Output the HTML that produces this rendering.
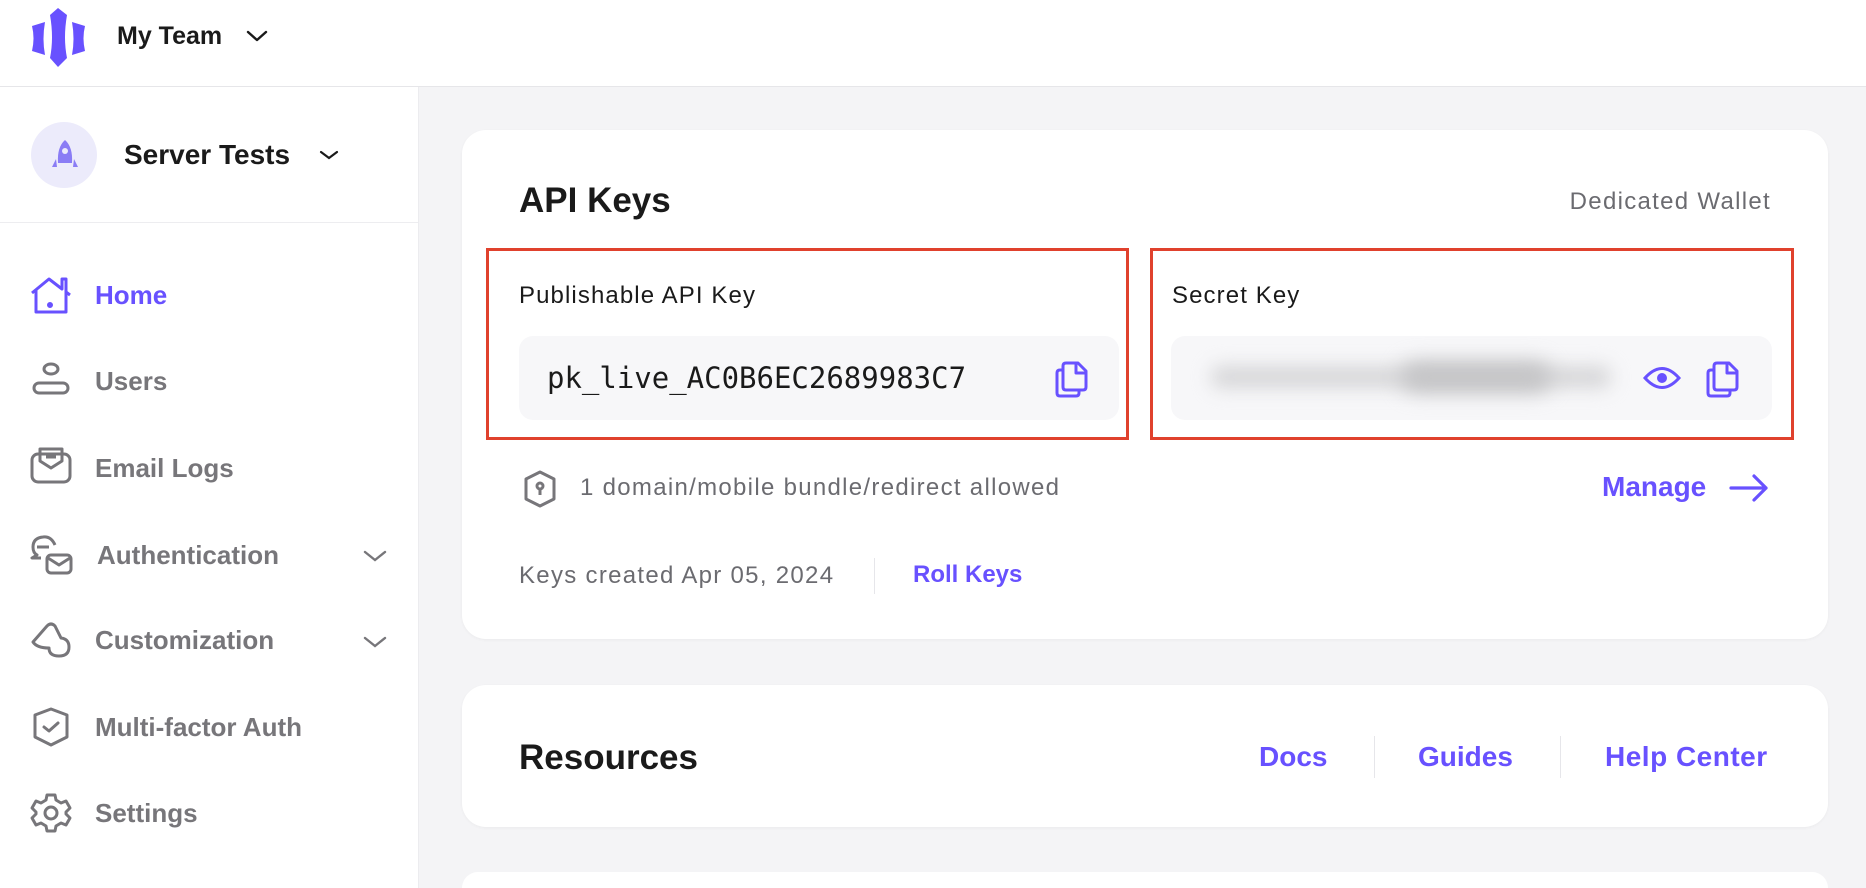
<!DOCTYPE html>
<html><head><meta charset="utf-8"><style>
*{box-sizing:border-box;margin:0;padding:0}
html{width:1866px;height:888px;overflow:hidden}
body{width:1866px;height:888px;overflow:hidden;background:#f4f4f6;font-family:"Liberation Sans",sans-serif;position:relative;color:#1a1a1a}
.abs{position:absolute}
.hdr{left:0;top:0;width:1866px;height:87px;background:#fff;border-bottom:1px solid #e6e6e9}
.side{left:0;top:87px;width:419px;height:801px;background:#fff}
.nav{position:absolute;left:29px;display:flex;align-items:center;font-size:26px;font-weight:bold;color:#77767a}
.nav svg{width:44px;height:44px;margin-right:22px}
.card{background:#fff;border-radius:24px;left:462px;width:1366px;box-shadow:0 1px 3px rgba(0,0,0,.04)}
.purple{color:#6851ff}
.red{border:3px solid #e0412d}
.kb{background:#f7f7f9;border-radius:14px}
.chev{position:absolute}
.g{font-size:24px;letter-spacing:1.3px;color:#6b6b70}
</style></head><body>
<div class="abs hdr">
<svg class="abs" style="left:30px;top:6px" width="58" height="64" viewBox="30 4 58 64">
<path d="M50 13 L58 6 L67 13 Q63 36 67 56 L58 65 L50 56 Q54 36 50 13Z" fill="#6851ff"/>
<path d="M32 24 L45 20 Q42 37 45 53 L32 49 Q35 36 32 24Z" fill="#6851ff"/>
<path d="M85 24 L72 20 Q75 37 72 53 L85 49 Q82 36 85 24Z" fill="#6851ff"/>
</svg>
<div class="abs" style="left:117px;top:22px;font-size:25px;font-weight:bold;color:#1a1a1a">My Team</div>
<svg class="abs" style="left:245px;top:28px" width="24" height="16" viewBox="0 0 24 16"><path d="M3 4 L12 12 L21 4" fill="none" stroke="#1a1a1a" stroke-width="2.4" stroke-linecap="round" stroke-linejoin="round"/></svg>
</div>
<div class="abs side">
<div class="abs" style="left:31px;top:35px;width:66px;height:66px;border-radius:50%;background:#ecebfb"></div>
<svg class="abs" style="left:48px;top:50px" width="34" height="36" viewBox="0 0 34 36"><path d="M17 3 Q25 10 24 26 L10 26 Q9 10 17 3Z" fill="#8a7cf5"/><circle cx="17" cy="14" r="3" fill="#ecebfb"/><path d="M8 22 L4 30 L9 30Z M26 22 L30 30 L25 30Z" fill="#8a7cf5"/></svg>
<div class="abs" style="left:124px;top:52px;font-size:28px;font-weight:bold;color:#1a1a1a">Server Tests</div>
<svg class="abs" style="left:318px;top:61px" width="22" height="14" viewBox="0 0 22 14"><path d="M3 4 L11 10 L19 4" fill="none" stroke="#1a1a1a" stroke-width="2.2" stroke-linecap="round"/></svg>
<div class="abs" style="left:0;top:135px;width:419px;height:1px;background:#ededf0"></div>
</div>
<div class="abs" style="left:418px;top:87px;width:1px;height:801px;background:#ececef"></div>

<div class="nav purple" style="top:273px;color:#6851ff"><svg viewBox="0 0 44 44" fill="none" stroke="#6851ff" stroke-width="3" stroke-linejoin="round"><path d="M3 20 L20 6 L33 16 L33 6 L37 6 L37 19 L41 22 M7 17 L7 39 L37 39 L37 19"/><circle cx="21" cy="32" r="1.5" fill="#6851ff"/></svg>Home</div>
<div class="nav" style="top:359px"><svg viewBox="0 0 44 44" fill="none" stroke="#77767a" stroke-width="3"><ellipse cx="22" cy="10" rx="7" ry="5"/><rect x="5" y="24" width="34" height="10" rx="5"/></svg>Users</div>
<div class="nav" style="top:446px"><svg viewBox="0 0 44 44" fill="none" stroke="#77767a" stroke-width="3" stroke-linejoin="round"><rect x="3" y="8" width="38" height="28" rx="6"/><path d="M11 15 L11 3 L33 3 L33 15 L22 22 Z"/><path d="M17 11 L27 11"/></svg>Email Logs</div>
<div class="nav" style="top:533px"><svg viewBox="0 0 44 44" fill="none" stroke="#77767a" stroke-width="3" stroke-linejoin="round"><path d="M26 12 Q22 3 14 4 Q4 5 4 14 Q4 20 8 22 L3 25 L12 25"/><path d="M8 14 L20 14"/><rect x="18" y="22" width="24" height="18" rx="4"/><path d="M19 25 L30 32 L41 25"/></svg><span style="margin-left:2px">Authentication</span></div>
<div class="nav" style="top:618px"><svg viewBox="0 0 44 44" fill="none" stroke="#77767a" stroke-width="3" stroke-linejoin="round"><path d="M4 24 L18 8 Q22 4 26 8 L32 20 Q40 21 40 29 Q40 38 30 38 Q20 38 20 30 Q8 30 4 24Z"/></svg>Customization</div>
<div class="nav" style="top:705px"><svg viewBox="0 0 44 44" fill="none" stroke="#77767a" stroke-width="3" stroke-linejoin="round"><path d="M22 4 L38 10 L38 32 L22 40 L6 32 L6 10 Z"/><path d="M15 22 L20 26 L29 18" stroke-linecap="round"/></svg>Multi-factor Auth</div>
<div class="nav" style="top:791px"><svg viewBox="0 0 44 44" fill="none" stroke="#77767a" stroke-width="3" stroke-linejoin="round"><path d="M18 4 L26 4 L27 9 L32 12 L37 10 L41 17 L37 21 L37 23 L41 27 L37 34 L32 32 L27 35 L26 40 L18 40 L17 35 L12 32 L7 34 L3 27 L7 23 L7 21 L3 17 L7 10 L12 12 L17 9 Z"/><circle cx="22" cy="22" r="6"/></svg>Settings</div>
<svg class="chev" style="left:362px;top:548px" width="26" height="16" viewBox="0 0 26 16"><path d="M3 4 L13 12 L23 4" fill="none" stroke="#77767a" stroke-width="2.4" stroke-linecap="round"/></svg>
<svg class="chev" style="left:362px;top:634px" width="26" height="16" viewBox="0 0 26 16"><path d="M3 4 L13 12 L23 4" fill="none" stroke="#77767a" stroke-width="2.4" stroke-linecap="round"/></svg>

<div class="abs card" style="top:130px;height:509px"></div>
<div class="abs" style="left:519px;top:181px;font-size:35px;font-weight:bold">API Keys</div>
<div class="abs g" style="right:95px;top:188px">Dedicated Wallet</div>
<div class="abs red" style="left:486px;top:248px;width:643px;height:192px"></div>
<div class="abs red" style="left:1150px;top:248px;width:644px;height:192px"></div>
<div class="abs" style="left:519px;top:282px;font-size:24px;letter-spacing:1.1px;color:#1a1a1a">Publishable API Key</div>
<div class="abs" style="left:1172px;top:282px;font-size:24px;letter-spacing:1.1px;color:#1a1a1a">Secret Key</div>
<div class="abs kb" style="left:519px;top:336px;width:600px;height:84px"></div>
<div class="abs kb" style="left:1171px;top:336px;width:601px;height:84px;overflow:hidden"><div style="position:absolute;left:40px;top:30px;width:400px;height:22px;background:#d6d6d8;filter:blur(9px);border-radius:10px"></div><div style="position:absolute;left:230px;top:26px;width:150px;height:30px;background:#c4c4c6;filter:blur(10px);border-radius:15px"></div></div>
<div class="abs" style="left:547px;top:361px;font-family:'DejaVu Sans Mono','Liberation Mono',monospace;font-size:29px;color:#1a1a1a">pk_live_AC0B6EC2689983C7</div>
<svg class="abs" style="left:1054px;top:359px" width="36" height="40" viewBox="0 0 36 40" fill="none" stroke="#6851ff" stroke-width="3" stroke-linejoin="round"><path d="M12 4 L24 4 L32 12 L32 28 Q32 31 29 31 L12 31 Q9 31 9 28 L9 7 Q9 4 12 4Z"/><path d="M9 11 L6 11 Q3 11 3 14 L3 34 Q3 37 6 37 L22 37 Q25 37 25 34 L25 31"/><path d="M22 4 L22 14 L32 14"/></svg>
<svg class="abs" style="left:1642px;top:363px" width="40" height="30" viewBox="0 0 40 30" fill="none" stroke="#6851ff" stroke-width="3"><path d="M3 15 Q20 -4 37 15 Q20 34 3 15Z"/><circle cx="20" cy="15" r="3.5" fill="#6851ff"/></svg>
<svg class="abs" style="left:1705px;top:359px" width="36" height="40" viewBox="0 0 36 40" fill="none" stroke="#6851ff" stroke-width="3" stroke-linejoin="round"><path d="M12 4 L24 4 L32 12 L32 28 Q32 31 29 31 L12 31 Q9 31 9 28 L9 7 Q9 4 12 4Z"/><path d="M9 11 L6 11 Q3 11 3 14 L3 34 Q3 37 6 37 L22 37 Q25 37 25 34 L25 31"/><path d="M22 4 L22 14 L32 14"/></svg>
<svg class="abs" style="left:522px;top:469px" width="36" height="40" viewBox="0 0 36 40" fill="none" stroke="#77767a" stroke-width="3" stroke-linejoin="round"><path d="M18 3 L32 10 L32 30 L18 37 L4 30 L4 10 Z"/><circle cx="18" cy="17" r="3" /><path d="M18 20 L18 26"/></svg>
<div class="abs g" style="left:580px;top:474px">1 domain/mobile bundle/redirect allowed</div>
<div class="abs purple" style="left:1602px;top:471px;font-size:28px;font-weight:bold">Manage</div>
<svg class="abs" style="left:1728px;top:472px" width="42" height="32" viewBox="0 0 42 32" fill="none" stroke="#6851ff" stroke-width="3.2" stroke-linecap="round" stroke-linejoin="round"><path d="M3 16 L38 16 M26 4 L38 16 L26 28"/></svg>
<div class="abs g" style="left:519px;top:562px">Keys created Apr 05, 2024</div>
<div class="abs" style="left:874px;top:558px;width:1px;height:36px;background:#e6e6ea"></div>
<div class="abs purple" style="left:913px;top:561px;font-size:24px;font-weight:bold">Roll Keys</div>

<div class="abs card" style="top:685px;height:142px"></div>
<div class="abs" style="left:519px;top:738px;font-size:35px;font-weight:bold">Resources</div>
<div class="abs purple" style="left:1259px;top:741px;font-size:28px;font-weight:bold">Docs</div>
<div class="abs" style="left:1374px;top:736px;width:1px;height:42px;background:#e6e6ea"></div>
<div class="abs purple" style="left:1418px;top:741px;font-size:28px;font-weight:bold">Guides</div>
<div class="abs" style="left:1560px;top:736px;width:1px;height:42px;background:#e6e6ea"></div>
<div class="abs purple" style="left:1605px;top:741px;font-size:28px;font-weight:bold;letter-spacing:0.5px">Help Center</div>
<div class="abs" style="left:462px;top:872px;width:1366px;height:16px;background:#fff;border-radius:24px 24px 0 0"></div>
</body></html>
